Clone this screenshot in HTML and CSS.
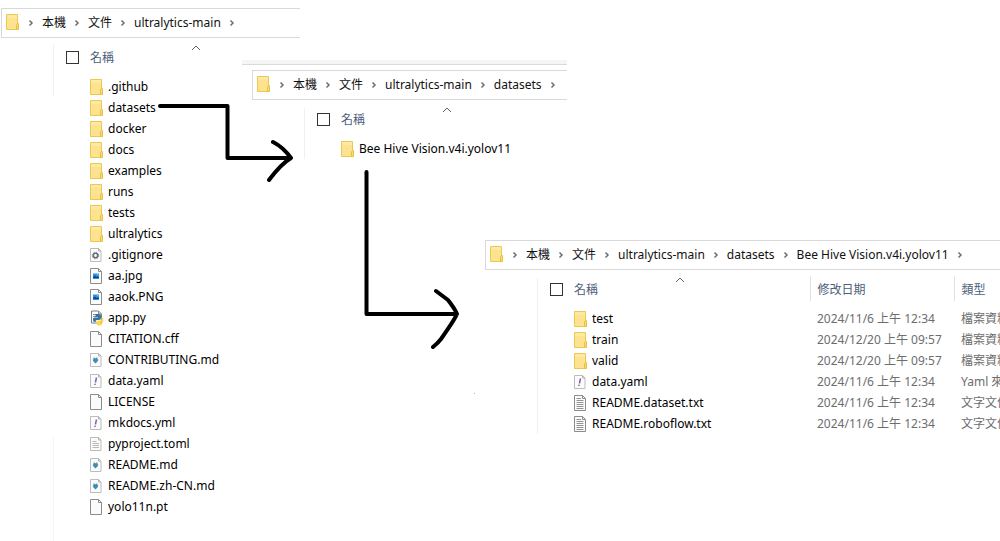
FILE: index.html
```html
<!DOCTYPE html>
<html lang="zh-Hant">
<head>
<meta charset="utf-8">
<title>ultralytics-main</title>
<link rel="stylesheet" href="styles.css">
</head>
<body>
<svg class="defs" aria-hidden="true">
  <symbol id="folder" viewBox="0 0 14 16">
    <path d="M.5.5h11v15H.5z" fill="#fde390" stroke="#ebc850"/>
    <path d="M1 1h10v3H1z" fill="#fee9a4"/>
    <path d="M10.500 15.500v-5l1-1h1v6z" fill="#fbdc72" stroke="#e6c045"/>
  </symbol>
  <symbol id="blank" viewBox="0 0 14 16">
    <path d="M.5.5h8l3 3v12H.5z" fill="#fbfbfb" stroke="#8c8c8c"/>
    <path d="M8.500.5v3h3" fill="none" stroke="#8c8c8c"/>
  </symbol>
  <symbol id="small" viewBox="0 0 14 16">
    <path d="M.5 1.500h8l2.500 2.500v10.500H.5z" fill="#fcfcfc" stroke="#bcbcbc"/>
    <path d="M8.500 1.500v2.500H11" fill="none" stroke="#b0b0b0"/>
  </symbol>
  <symbol id="gear" viewBox="0 0 14 16">
    <use href="#small"/>
    <circle cx="5.500" cy="8.500" r="2.200" fill="none" stroke="#62757d" stroke-width="1.600"/>
    <circle cx="5.500" cy="8.500" r="3.200" fill="none" stroke="#62757d" stroke-width="1" stroke-dasharray="1.260 1.250"/>
  </symbol>
  <symbol id="image" viewBox="0 0 14 16">
    <use href="#blank"/>
    <path d="M3 5.500h6v5H3z" fill="#1e96ea"/>
    <path d="M3 10.500V9l2-1.500L6.500 9l1-1L9 9.500v1z" fill="#0b4690"/>
    <circle cx="7.800" cy="6.800" r=".5" fill="#fff"/>
  </symbol>
  <symbol id="python" viewBox="0 0 14 16">
    <path d="M1.500 1h7l3 3v9h-10z" fill="#fff" stroke="#7c7c7c"/>
    <path d="M8.500 1v3h3M3 4.500h4M3 6.500h3M3 8.500h1" fill="none" stroke="#8a8a8a"/>
    <path d="M6 4h3q2 0 2 2v2q0 2-2 2H7q-1.500 0-1.500 2H4.500Q3 12 3 9.500T5 7.500h3V7H5.500V5q0-1 .5-1z" fill="#3573a7"/>
    <path d="M11.500 7.500q2 0 2 2.500t-1.500 2.500h-2v.5h2v1q0 1.500-2 1.500H8.500q-2 0-2-2v-1q0-2 2-2h1.500q1.500 0 1.500-1.500z" fill="#ffd644"/>
  </symbol>
  <symbol id="markdown" viewBox="0 0 14 16">
    <use href="#small"/>
    <path d="M3.500 5.500h1.200v.8h1.600v-.8h1.200v2h1L7.500 9.500 5.500 11.500l-2-2L2.500 7.500h1z" fill="#4289ad"/>
  </symbol>
  <symbol id="yaml" viewBox="0 0 14 16">
    <use href="#small"/>
    <path d="M6.500 4.500L5.400 9.500" stroke="#8a5cb5" stroke-width="1.500"/>
    <path d="M5.200 10.700L5 12" stroke="#8a5cb5" stroke-width="1.500"/>
  </symbol>
  <symbol id="toml" viewBox="0 0 14 16">
    <use href="#small"/>
    <path d="M2.500 5.500h4M2.500 7.500H9M2.500 9.500H9M2.500 11.500H9" stroke="#b8b8b8"/>
  </symbol>
  <symbol id="text" viewBox="0 0 14 16">
    <use href="#blank"/>
    <path d="M2.500 3.500H7M2.500 5.500h7M2.500 7.500h7M2.500 9.500h7M2.500 11.500h7M2.500 13.500h7" stroke="#929292"/>
  </symbol>
  <symbol id="chevron" viewBox="0 0 6 8">
    <path d="M1.500 1.500L4 4 1.500 6.500" fill="none" stroke="#6e6e6e" stroke-width="1.500"/>
  </symbol>
  <symbol id="sort" viewBox="0 0 10 6">
    <path d="M1 5l4-4 4 4" fill="none" stroke="#606060"/>
  </symbol>
</svg>

<main class="desktop">
  <section class="window window-root" aria-label="ultralytics-main">
    <nav class="path">
      <svg class="icon"><use href="#folder"/></svg>
      <svg class="chevron"><use href="#chevron"/></svg><a href="#">本機</a>
      <svg class="chevron"><use href="#chevron"/></svg><a href="#">文件</a>
      <svg class="chevron"><use href="#chevron"/></svg><a href="#">ultralytics-main</a>
      <svg class="chevron"><use href="#chevron"/></svg>
    </nav>
    <div class="pane">
      <table class="files">
        <thead><tr>
          <th class="pick"><input type="checkbox" aria-label="全選"></th>
          <th class="name">名稱<svg class="sort"><use href="#sort"/></svg></th>
        </tr></thead>
        <tbody>
          <tr><td></td><td><span class="file"><svg class="icon"><use href="#folder"/></svg>.github</span></td></tr>
          <tr><td></td><td><span class="file"><svg class="icon"><use href="#folder"/></svg>datasets</span></td></tr>
          <tr><td></td><td><span class="file"><svg class="icon"><use href="#folder"/></svg>docker</span></td></tr>
          <tr><td></td><td><span class="file"><svg class="icon"><use href="#folder"/></svg>docs</span></td></tr>
          <tr><td></td><td><span class="file"><svg class="icon"><use href="#folder"/></svg>examples</span></td></tr>
          <tr><td></td><td><span class="file"><svg class="icon"><use href="#folder"/></svg>runs</span></td></tr>
          <tr><td></td><td><span class="file"><svg class="icon"><use href="#folder"/></svg>tests</span></td></tr>
          <tr><td></td><td><span class="file"><svg class="icon"><use href="#folder"/></svg>ultralytics</span></td></tr>
          <tr><td></td><td><span class="file"><svg class="icon"><use href="#gear"/></svg>.gitignore</span></td></tr>
          <tr><td></td><td><span class="file"><svg class="icon"><use href="#image"/></svg>aa.jpg</span></td></tr>
          <tr><td></td><td><span class="file"><svg class="icon"><use href="#image"/></svg>aaok.PNG</span></td></tr>
          <tr><td></td><td><span class="file"><svg class="icon"><use href="#python"/></svg>app.py</span></td></tr>
          <tr><td></td><td><span class="file"><svg class="icon"><use href="#blank"/></svg>CITATION.cff</span></td></tr>
          <tr><td></td><td><span class="file"><svg class="icon"><use href="#markdown"/></svg>CONTRIBUTING.md</span></td></tr>
          <tr><td></td><td><span class="file"><svg class="icon"><use href="#yaml"/></svg>data.yaml</span></td></tr>
          <tr><td></td><td><span class="file"><svg class="icon"><use href="#blank"/></svg>LICENSE</span></td></tr>
          <tr><td></td><td><span class="file"><svg class="icon"><use href="#yaml"/></svg>mkdocs.yml</span></td></tr>
          <tr><td></td><td><span class="file"><svg class="icon"><use href="#toml"/></svg>pyproject.toml</span></td></tr>
          <tr><td></td><td><span class="file"><svg class="icon"><use href="#markdown"/></svg>README.md</span></td></tr>
          <tr><td></td><td><span class="file"><svg class="icon"><use href="#markdown"/></svg>README.zh-CN.md</span></td></tr>
          <tr><td></td><td><span class="file"><svg class="icon"><use href="#blank"/></svg>yolo11n.pt</span></td></tr>
        </tbody>
      </table>
    </div>
  </section>

  <div class="ribbon-edge"></div>
  <section class="window window-datasets" aria-label="datasets">
    <nav class="path">
      <svg class="icon"><use href="#folder"/></svg>
      <svg class="chevron"><use href="#chevron"/></svg><a href="#">本機</a>
      <svg class="chevron"><use href="#chevron"/></svg><a href="#">文件</a>
      <svg class="chevron"><use href="#chevron"/></svg><a href="#">ultralytics-main</a>
      <svg class="chevron"><use href="#chevron"/></svg><a href="#">datasets</a>
      <svg class="chevron"><use href="#chevron"/></svg>
    </nav>
    <div class="pane">
      <table class="files">
        <thead><tr>
          <th class="pick"><input type="checkbox" aria-label="全選"></th>
          <th class="name">名稱<svg class="sort"><use href="#sort"/></svg></th>
        </tr></thead>
        <tbody>
          <tr><td></td><td><span class="file"><svg class="icon"><use href="#folder"/></svg>Bee Hive Vision.v4i.yolov11</span></td></tr>
        </tbody>
      </table>
    </div>
  </section>

  <section class="window window-vision" aria-label="Bee Hive Vision.v4i.yolov11">
    <nav class="path">
      <svg class="icon"><use href="#folder"/></svg>
      <svg class="chevron"><use href="#chevron"/></svg><a href="#">本機</a>
      <svg class="chevron"><use href="#chevron"/></svg><a href="#">文件</a>
      <svg class="chevron"><use href="#chevron"/></svg><a href="#">ultralytics-main</a>
      <svg class="chevron"><use href="#chevron"/></svg><a href="#">datasets</a>
      <svg class="chevron"><use href="#chevron"/></svg><a href="#">Bee Hive Vision.v4i.yolov11</a>
      <svg class="chevron"><use href="#chevron"/></svg>
    </nav>
    <div class="pane">
      <table class="files">
        <thead><tr>
          <th class="pick"><input type="checkbox" aria-label="全選"></th>
          <th class="name">名稱<svg class="sort"><use href="#sort"/></svg></th>
          <th class="date">修改日期</th>
          <th class="type">類型</th>
        </tr></thead>
        <tbody>
          <tr><td></td><td><span class="file"><svg class="icon"><use href="#folder"/></svg>test</span></td><td class="meta">2024/11/6 上午 12:34</td><td class="meta">檔案資料夾</td></tr>
          <tr><td></td><td><span class="file"><svg class="icon"><use href="#folder"/></svg>train</span></td><td class="meta">2024/12/20 上午 09:57</td><td class="meta">檔案資料夾</td></tr>
          <tr><td></td><td><span class="file"><svg class="icon"><use href="#folder"/></svg>valid</span></td><td class="meta">2024/12/20 上午 09:57</td><td class="meta">檔案資料夾</td></tr>
          <tr><td></td><td><span class="file"><svg class="icon"><use href="#yaml"/></svg>data.yaml</span></td><td class="meta">2024/11/6 上午 12:34</td><td class="meta">Yaml 來源檔案</td></tr>
          <tr><td></td><td><span class="file"><svg class="icon"><use href="#text"/></svg>README.dataset.txt</span></td><td class="meta">2024/11/6 上午 12:34</td><td class="meta">文字文件</td></tr>
          <tr><td></td><td><span class="file"><svg class="icon"><use href="#text"/></svg>README.roboflow.txt</span></td><td class="meta">2024/11/6 上午 12:34</td><td class="meta">文字文件</td></tr>
        </tbody>
      </table>
    </div>
  </section>

  <svg class="arrows" viewBox="150 90 340 310" aria-hidden="true">
    <g fill="none" stroke="#000" stroke-width="4" stroke-linecap="round" stroke-linejoin="round">
      <path d="M160 106H227.500V158H290M273 142Q283 147 291 158Q281 164 269 180"/>
      <path d="M366.500 172V314H457M436 291L448 300Q455 309 457 314Q455 319 441 339Q438 343 433 347"/>
    </g>
    <path d="M474 393h1v1h-1z" fill="#9fc3cf"/>
  </svg>
</main>
</body>
</html>
```
FILE: styles.css
```css
body {
  margin: 0;
  background: #fff;
  color: #000;
  font: 12px/20px "Noto Sans", "Noto Sans CJK TC", sans-serif;
}

.defs {
  display: none;
}

.desktop {
  position: relative;
  display: flex;
  min-height: 100vh;
  overflow: hidden;
}

.window {
  display: flex;
  flex-direction: column;
}

.window-root {
  width: 299px;
  margin: 8px 0 0 1px;
}

.window-datasets {
  position: absolute;
  left: 252px;
  top: 70px;
  width: 315px;
}

.window-vision {
  position: absolute;
  left: 485px;
  right: 0;
  top: 240px;
}

.ribbon-edge {
  position: absolute;
  left: 242px;
  top: 60px;
  width: 325px;
  height: 4px;
  background: #f5f5f5;
  border-bottom: 1px solid #dadada;
}

.path {
  display: flex;
  align-items: center;
  height: 28px;
  padding-left: 4px;
  border: 1px solid #d9d9d9;
  border-right: 0;
  white-space: nowrap;
}

.path a {
  color: #111;
  text-decoration: none;
}

.icon {
  flex: none;
  width: 14px;
  height: 16px;
}

.chevron {
  flex: none;
  width: 6px;
  height: 8px;
  margin: 0 8px;
}

.path .icon {
  margin-bottom: 2px;
}

.pane {
  flex: 1;
  margin-left: 52px;
  padding-top: 6px;
  overflow: hidden;
  background: linear-gradient(#f0f0f0, #f0f0f0) no-repeat 0 8px / 1px 60px;
}

.window-root .pane {
  background:
    linear-gradient(#f0f0f0, #f0f0f0) no-repeat 0 6px / 1px 52px,
    linear-gradient(#f4f4f4, #f4f4f4) no-repeat 0 100% / 1px 104px;
}

.window-vision .pane {
  background-size: 1px 160px;
}

.files {
  width: 100%;
  table-layout: fixed;
  border-collapse: collapse;
}

.files th {
  position: relative;
  box-sizing: border-box;
  height: 25px;
  padding: 2px 0 0;
  color: #4c607a;
  font-weight: 400;
  text-align: left;
}

.files tbody::before {
  content: "";
  display: block;
  height: 7px;
}

.files td {
  height: 21px;
  padding: 0;
  white-space: nowrap;
}

.files .pick {
  width: 37px;
}

.pick input {
  display: block;
  box-sizing: border-box;
  width: 13px;
  height: 13px;
  margin: 0 0 0 13px;
  appearance: none;
  background: #fff;
  border: 1px solid #333;
}

.window-vision .name {
  width: 236px;
}

.files .date,
.files .type {
  padding-left: 7px;
  border-left: 1px solid #e2e2e2;
}

.files .date {
  width: 144px;
}

.sort {
  position: absolute;
  left: 101px;
  top: 1px;
  width: 10px;
  height: 6px;
}

.file {
  display: flex;
  align-items: center;
  gap: 4px;
}

.files .meta {
  padding-left: 7px;
  color: #6d6d6d;
}

.arrows {
  position: absolute;
  left: 150px;
  top: 90px;
  width: 340px;
  height: 310px;
}
```
